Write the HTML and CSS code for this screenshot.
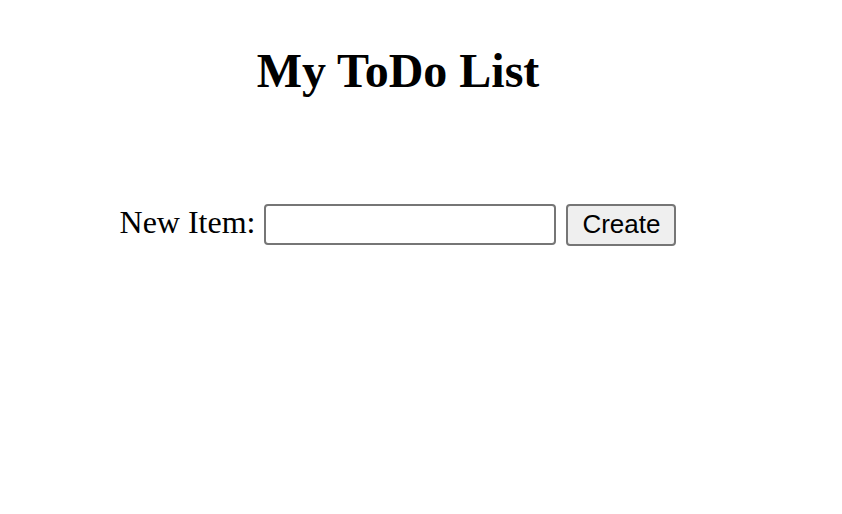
FILE: index.html
```html
<!DOCTYPE html>
<html>
<head>
<meta charset="utf-8">
<link rel="stylesheet" href="styles.css">
</head>
<body>
<div class="page">
  <h1 class="title">My ToDo List</h1>
  <form class="new-item">
    <label class="label" for="item">New Item:</label>
    <input class="field" id="item" type="text">
    <button class="btn" type="button">Create</button>
  </form>
</div>
</body>
</html>
```
FILE: styles.css
```css
html, body { margin: 0; padding: 0; background: #fff; }
body { font-family: "Liberation Serif", "Times New Roman", serif; color: #000; }
.page { width: 780px; margin-left: 8px; padding-top: 8px; text-align: center; }
.title { font-size: 48px; font-weight: bold; margin: 36px 0 0 0; line-height: 53px; }
.new-item { display: flex; justify-content: center; align-items: flex-start; margin-top: 107px; }
.label { font-size: 32px; line-height: 32px; margin: 2px 9px 0 0; }
.field { box-sizing: border-box; width: 292px; height: 41px; border: 2px solid #767676; border-radius: 4px; background: #fff; font-size: 24px; padding: 2px 6px; margin: 0 10px 0 0; }
.btn { box-sizing: border-box; width: 110px; height: 42px; border: 2px solid #767676; border-radius: 4px; background: #efefef; font-family: "Liberation Sans", Arial, sans-serif; font-size: 26px; color: #000; padding: 0 8px 2px; margin: 0; }
```
